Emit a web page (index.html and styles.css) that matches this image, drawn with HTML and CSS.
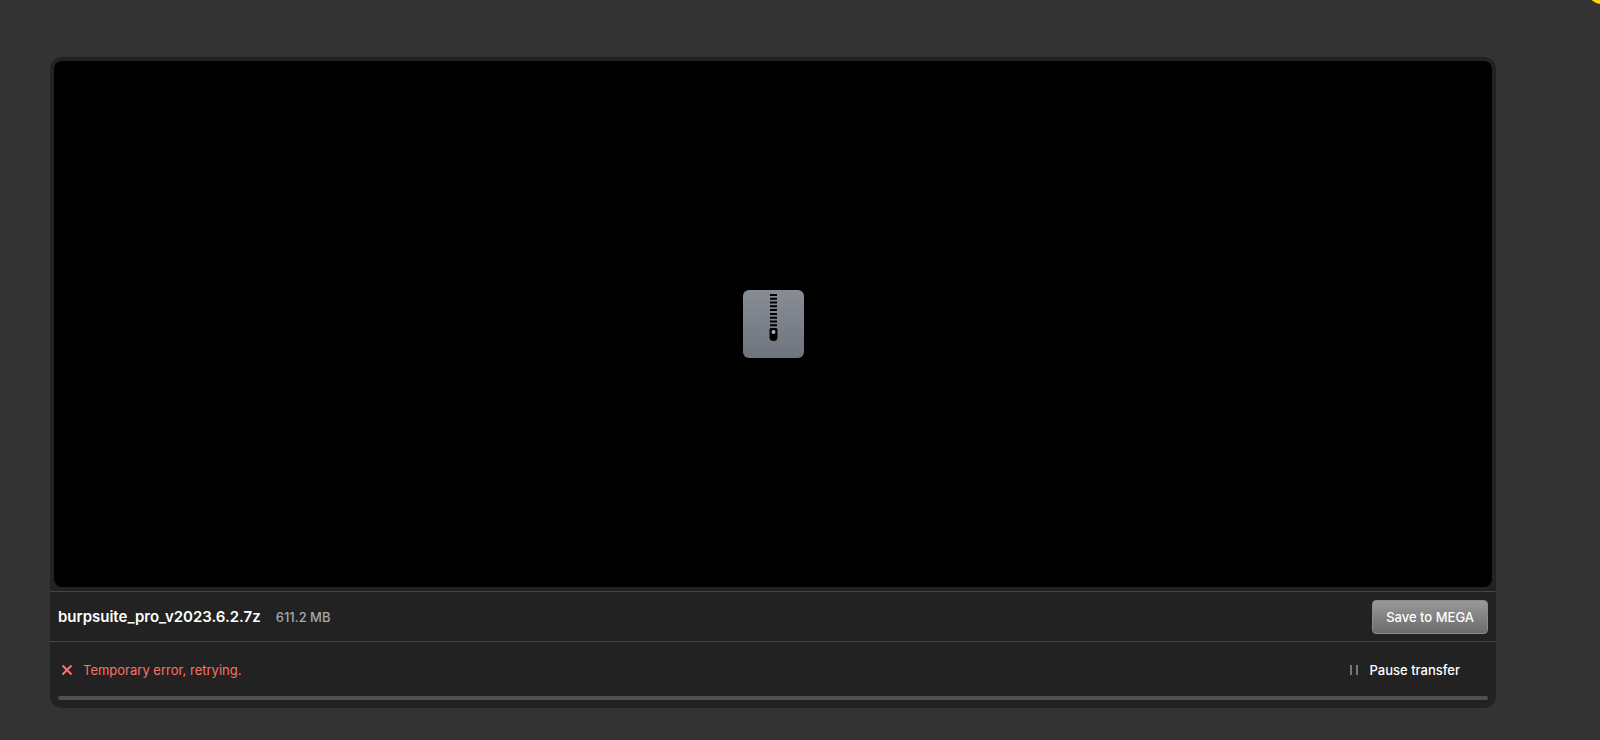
FILE: index.html
```
<!DOCTYPE html>
<html lang="en">
  <head>
    <meta charset="UTF-8" />
    <meta name="viewport" content="width=device-width, initial-scale=1.0" />
    <title>burpsuite_pro_v2023.6.2.7z</title>
    <link rel="stylesheet" href="styles.css">
  </head>
  <body>
    <span class="corner-badge"></span>

    <main class="file-card">
      <div class="preview-wrap">
        <div class="preview">
          <svg class="zip-icon" viewBox="0 0 61 68" aria-hidden="true">
            <defs>
              <linearGradient id="zip-fill" x1="0" y1="0" x2="0" y2="1">
                <stop offset="0" stop-color="#888c94" />
                <stop offset="1" stop-color="#70747e" />
              </linearGradient>
            </defs>
            <rect width="61" height="68" rx="6" fill="url(#zip-fill)" />
            <path
              d="M27 5h7M27 8.7h7M27 12.5h7M27 16.3h7M27 20.1h7M27 23.9h7M27 27.7h7M27 31.5h7M27 35.3h7"
              stroke="#000"
              stroke-width="2"
            />
            <path
              d="M28 38h5q1.500 0 1.500 1.500v7.500a4 4 0 0 1-8 0v-7.500q0-1.500 1.500-1.500z"
              fill="#000"
            />
            <circle cx="30.500" cy="42" r="2" fill="#a9adb4" />
          </svg>
        </div>
      </div>

      <div class="file-row">
        <h1 class="file-name">burpsuite_pro_v2023.6.2.7z</h1>
        <span class="file-size">611.2 MB</span>
        <button class="save-button" type="button">Save to MEGA</button>
      </div>

      <div class="transfer">
        <div class="transfer-row">
          <p class="error">
            <svg class="error-icon" viewBox="0 0 12 12" aria-hidden="true">
              <path d="M1.500 1.500l9 9M10.500 1.500l-9 9" stroke="currentColor" stroke-width="2" />
            </svg>
            Temporary error, retrying.
          </p>
          <button class="pause-button" type="button">
            <svg class="pause-icon" viewBox="0 0 8 10" aria-hidden="true">
              <path d="M1 0v10M7 0v10" stroke="#777" stroke-width="2" />
            </svg>
            Pause transfer
          </button>
        </div>
        <div class="progress"></div>
      </div>
    </main>
  </body>
</html>
```

FILE: styles.css
```
* {
  margin: 0;
  padding: 0;
  box-sizing: border-box;
  font-family: "Inter", sans-serif;
}

body {
  position: relative;
  display: flex;
  min-height: 100vh;
  padding: 57px 104px 32px 50px;
  overflow: hidden;
  background-color: #333333;
  color: #ffffff;
  font-size: 13px;
  line-height: 20px;
}

.corner-badge {
  position: absolute;
  top: -28px;
  right: -18px;
  width: 32px;
  height: 32px;
  border-radius: 50%;
  background-color: #ffd200;
}

.file-card {
  display: flex;
  flex: 1;
  flex-direction: column;
  border-radius: 12px;
  background-color: #222222;
}

.preview-wrap {
  display: flex;
  flex: 1;
  padding: 4px;
}

.preview {
  display: flex;
  flex: 1;
  align-items: center;
  justify-content: center;
  border-radius: 8px;
  background-color: #000000;
}

.zip-icon {
  width: 61px;
  height: 68px;
}

.file-row {
  display: flex;
  align-items: center;
  gap: 15px;
  padding: 8px 8px 7px;
  border-top: 1px solid #444444;
  border-bottom: 1px solid #444444;
}

.file-name {
  font-size: 15px;
  font-weight: 600;
}

.file-size {
  color: #a7a7a7;
  font-weight: 500;
}

.save-button {
  height: 34px;
  margin-left: auto;
  padding: 0 13px;
  border: 1px solid #8c8c8c;
  border-radius: 4px;
  background: linear-gradient(#999999, #6c6c6c);
  color: #ffffff;
  font-size: 13px;
  font-weight: 500;
}

.transfer {
  padding: 18px 8px 8px;
}

.transfer-row {
  display: flex;
  align-items: center;
  justify-content: space-between;
  padding: 0 28px 0 3px;
  margin-bottom: 16px;
}

.error {
  display: flex;
  align-items: center;
  gap: 10px;
  color: #f8736b;
}

.error-icon {
  width: 12px;
  height: 12px;
}

.pause-button {
  display: flex;
  align-items: center;
  gap: 12px;
  border: 0;
  background: none;
  color: #ffffff;
  font-size: 13px;
  font-weight: 500;
  line-height: 20px;
}

.pause-icon {
  width: 8px;
  height: 10px;
}

.progress {
  height: 4px;
  border-radius: 2px;
  background-color: #505050;
}
```
